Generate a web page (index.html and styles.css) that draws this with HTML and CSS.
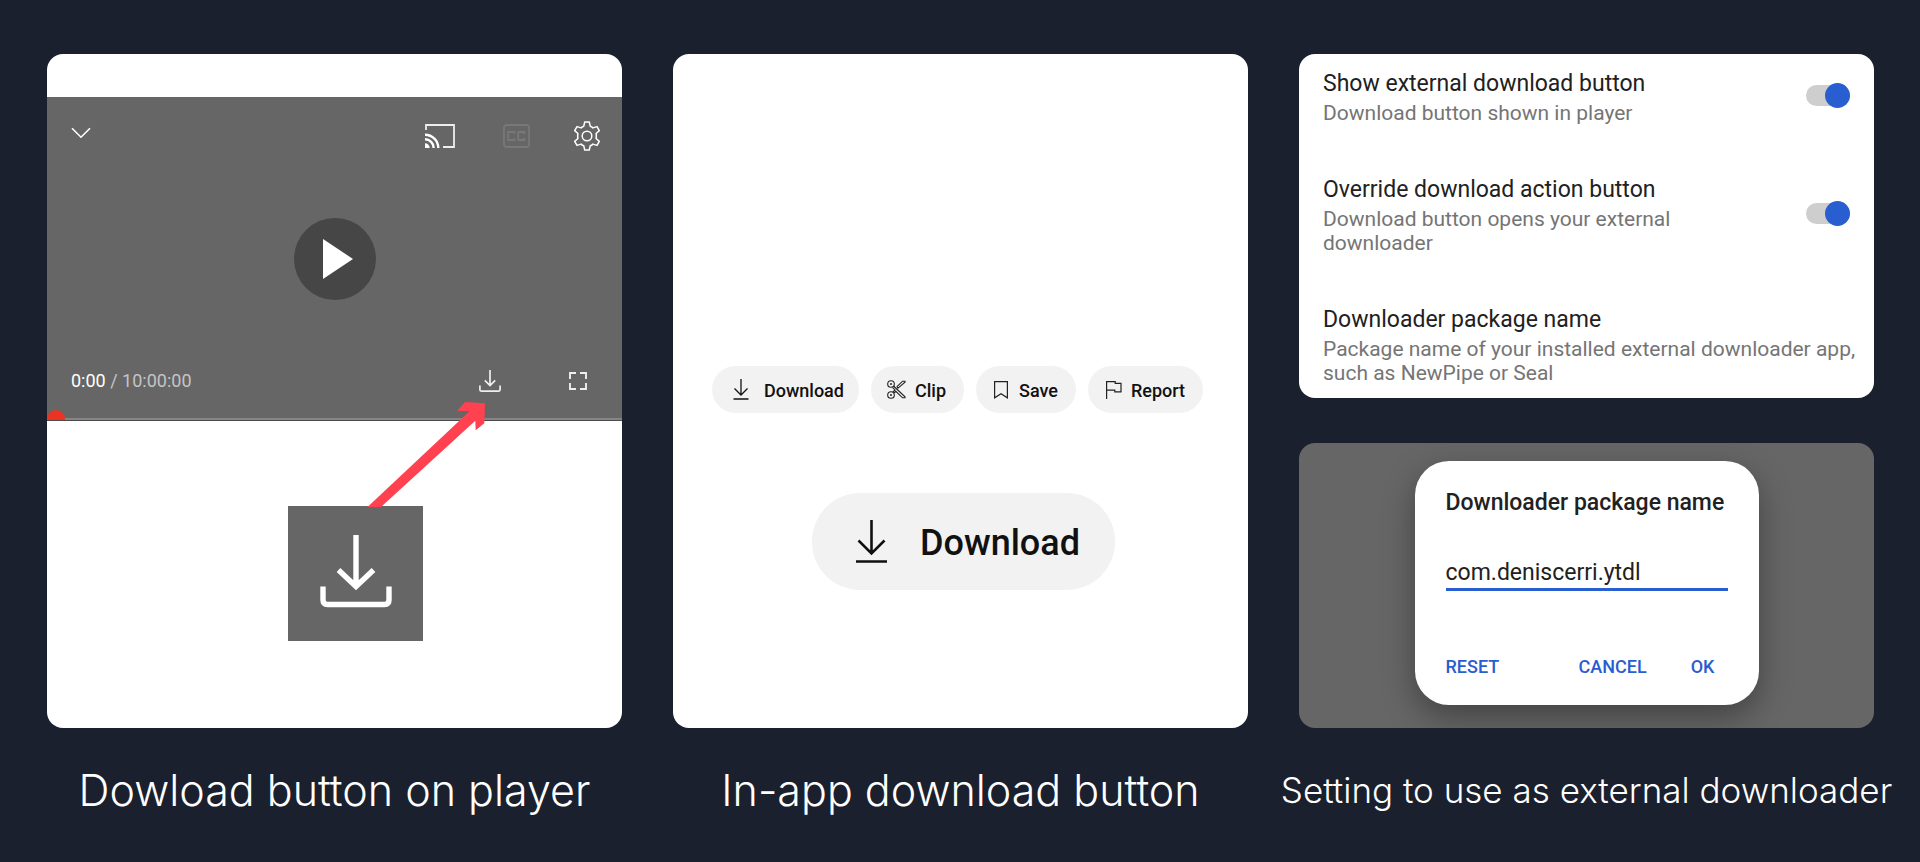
FILE: index.html
```html
<!DOCTYPE html>
<html lang="en">
<head>
<meta charset="utf-8">
<title>External downloader</title>
<link rel="stylesheet" href="styles.css">
</head>
<body>
<main class="board">
  <figure class="column">
    <div class="card phone">
      <section class="player" aria-label="Player">
        <div class="bar bar-top">
          <button class="icon-button" aria-label="Collapse"><svg class="chevron" width="20" height="12" viewBox="0 0 20 12"><path d="M1 1.2l9 9 9-9" fill="none" stroke="#fff" stroke-width="1.6"/></svg></button>
          <div class="tools">
            <button class="icon-button" aria-label="Cast"><svg width="30" height="24" viewBox="0 0 30 24"><path d="M1 6V1h28v22H18" fill="none" stroke="#eee" stroke-width="1.8"/><g fill="none" stroke="#fff" stroke-width="2.4"><path d="M0 10.7A13.3 13.3 0 0 1 13.3 24M0 15.3A8.7 8.7 0 0 1 8.7 24"/></g><path d="M0 19.3A4.7 4.7 0 0 1 4.7 24H0z" fill="#fff"/></svg></button>
            <button class="icon-button captions" aria-label="Captions" disabled><svg width="27" height="24" viewBox="0 0 27 24"><g fill="none" stroke="#787878" stroke-width="1.8"><rect x="1" y="1" width="25" height="22" rx="2.5"/><path d="M11.3 10V8H5.200v8H11.300V14M21.300 10V8H15.200v8h6.100V14"/></g></svg></button>
            <button class="icon-button" aria-label="Settings"><svg width="30" height="30" viewBox="0 0 30 30"><g fill="none" stroke="#fff" stroke-width="1.5" stroke-linejoin="round"><path d="M12.7 1h4.6l.9 4.2q1.5.5 2.7 1.7l4.1-1.3 2.3 4-3.2 2.9q.5 2.5 0 5l3.2 2.9-2.3 4-4.1-1.3q-1.2 1.2-2.7 1.7l-.9 4.2h-4.6l-.9-4.2q-1.5-.5-2.7-1.7L5 24.400l-2.300-4 3.200-2.900q-.5-2.500 0-5L2.700 9.600l2.300-4 4.100 1.300q1.200-1.200 2.700-1.700z"/><circle cx="15" cy="15" r="4.800"/></g></svg></button>
          </div>
        </div>
        <button class="play" aria-label="Play"><svg width="30" height="40" viewBox="0 0 30 40"><path d="M0 0l30 20L0 40z" fill="#fff"/></svg></button>
        <div class="bar bar-bottom">
          <p class="time"><span class="now">0:00</span> / 10:00:00</p>
          <div class="tools tools-bottom">
            <button class="icon-button" aria-label="Download"><svg width="22" height="22" viewBox="0 0 72 72"><g fill="none" stroke="#eee" stroke-width="5.600"><path d="M36 0v51M19 34l17 17 17-17M3 51v14q0 4 4 4h58q4 0 4-4V51"/></g></svg></button>
            <button class="icon-button" aria-label="Full screen"><svg width="20" height="20" viewBox="0 0 20 20"><path d="M8 2H2v6M12 2h6v6M8 18H2v-6M12 18h6v-6" fill="none" stroke="#eee" stroke-width="1.900"/></svg></button>
          </div>
        </div>
        <div class="progress"><span class="knob"></span></div>
      </section>
      <div class="below">
        <div class="closeup">
          <svg class="pointer" width="118" height="106" viewBox="0 0 118 106"><path d="M.5 106L102.500 10.300l-12.200-.6L98 1l20 1.300-.7 20-8.600 7-.4-9.500L14 106z" fill="#ff4150"/></svg>
          <svg width="72" height="73" viewBox="0 0 72 73"><path d="M36 0v52M18.500 35L36 51.500 53.500 35M3 51.500V65q0 4.500 4.500 4.500h57q4.500 0 4.500-4.500V51.500" fill="none" stroke="#fff" stroke-width="5.400"/></svg>
        </div>
      </div>
    </div>
    <figcaption class="caption">Dowload button on player</figcaption>
  </figure>

  <figure class="column">
    <div class="card actions">
      <div class="chips">
        <button class="chip chip-wide"><svg width="16" height="21" viewBox="0 0 16 21"><path d="M8 0v15.500M1.500 9.500L8 16l6.500-6.500M.5 20h15" fill="none" stroke="#111" stroke-width="1.300"/></svg>Download</button>
        <button class="chip"><svg width="19" height="19" viewBox="0 0 19 19"><g fill="none" stroke="#222" stroke-width="1.100"><circle cx="4" cy="4" r="3.300"/><circle cx="4" cy="15" r="3.300"/><path d="M6.500 6L18 16.800v1h-2.400L8.800 11.300 6.800 13.200M5.800 12.200L8 10 5.500 7.300M11 8.200L18 2.200v-1h-2.400L10 6.500z"/></g><circle cx="4" cy="4" r="1" fill="#222"/><circle cx="4" cy="15" r="1" fill="#222"/></svg>Clip</button>
        <button class="chip"><svg class="narrow" width="14" height="18" viewBox="0 0 14 18"><path d="M.6.600h12.800v16.200L7 12.800.600 16.800z" fill="none" stroke="#222" stroke-width="1.200"/></svg>Save</button>
        <button class="chip"><svg class="flag" width="16" height="18" viewBox="0 0 16 18"><path d="M.6 18V.6h8.600v1.700h5.800v8.500H8.800V9.200H.6" fill="none" stroke="#222" stroke-width="1.200"/></svg>Report</button>
      </div>
      <button class="chip chip-large"><svg width="31" height="43" viewBox="0 0 31 43"><path d="M15.500 0v33M2.500 20.500l13 13 13-13M0 41.500h31" fill="none" stroke="#111" stroke-width="2.600"/></svg>Download</button>
    </div>
    <figcaption class="caption">In-app download button</figcaption>
  </figure>

  <figure class="column">
    <div class="stack">
      <div class="card settings">
        <label class="setting"><span class="words"><span class="name">Show external download button</span><span class="note">Download button shown in player</span></span><input class="switch" type="checkbox" checked></label>
        <label class="setting"><span class="words"><span class="name">Override download action button</span><span class="note">Download button opens your external downloader</span></span><input class="switch" type="checkbox" checked></label>
        <div class="setting"><span class="words words-full"><span class="name">Downloader package name</span><span class="note">Package name of your installed external downloader app, such as NewPipe or Seal</span></span></div>
      </div>
      <div class="card backdrop">
        <form class="dialog">
          <label class="dialog-title" for="package">Downloader package name</label>
          <input class="field" id="package" type="text" value="com.deniscerri.ytdl">
          <div class="dialog-buttons">
            <button class="text-button reset" type="button">RESET</button>
            <button class="text-button" type="button">CANCEL</button>
            <button class="text-button" type="button">OK</button>
          </div>
        </form>
      </div>
    </div>
    <figcaption class="caption caption-small">Setting to use as external downloader</figcaption>
  </figure>
</main>
</body>
</html>
```
FILE: styles.css
```css
* { box-sizing: border-box; }
body {
  margin: 0;
  min-height: 100vh;
  background: #1b202e;
  font-family: Roboto, sans-serif;
  color: #212121;
}
button { border: 0; padding: 0; background: none; font: inherit; color: inherit; }
svg { display: block; flex: none; }

.board {
  display: grid;
  grid-template-columns: repeat(3, minmax(0, 1fr));
  gap: 51px;
  padding: 54px 46px 0 47px;
}
.column {
  margin: 0;
  display: grid;
  grid-template-columns: minmax(0, 1fr);
  grid-template-rows: 674px auto;
}
.card { background: #fff; border-radius: 16px; overflow: hidden; }
.caption {
  display: flex;
  justify-content: center;
  padding-top: 30px;
  font: 300 43px/64px Inter, sans-serif;
  color: #fff;
  white-space: nowrap;
}
.caption-small { font-size: 35px; }

/* Player */
.phone { display: flex; flex-direction: column; padding-top: 43px; }
.player {
  display: flex;
  flex-direction: column;
  height: 324px;
  background: #666;
  border-bottom: 1px solid #4c4c4c;
}
.bar { display: flex; justify-content: space-between; align-items: center; }
.bar-top { padding: 24px 20px 0 24px; }
.chevron { margin-bottom: 6px; }
.tools { display: flex; align-items: center; gap: 42px; }
.captions { margin-left: 6px; }
.play {
  display: grid;
  place-items: center;
  align-self: center;
  width: 82px;
  height: 82px;
  margin-top: 67px;
  padding-left: 6px;
  border-radius: 50%;
  background: #464646;
}
.bar-bottom { margin-top: 69px; padding: 0 34px 0 24px; }
.tools-bottom { gap: 67px; }
.time { margin: 0; font-size: 18px; line-height: 24px; color: #c4c4c4; }
.now { color: #fff; }
.progress { height: 2px; margin-top: auto; background: #858585; }
.progress .knob {
  display: block;
  width: 18px;
  height: 10px;
  margin-top: -8px;
  border-radius: 9px 9px 0 0;
  background: #ec3323;
}
.below { flex: 1; display: flex; justify-content: center; align-items: flex-start; padding: 85px 0 0 42px; }
.closeup {
  position: relative;
  display: grid;
  place-items: center;
  width: 135px;
  height: 135px;
  padding-bottom: 5px;
  background: #666;
}
.pointer { position: absolute; left: 79px; bottom: 134px; overflow: visible; }

/* Action chips */
.actions { display: flex; flex-direction: column; align-items: center; padding-top: 312px; gap: 80px; }
.chips { display: flex; gap: 12px; margin-right: 6px; }
.chip {
  display: flex;
  align-items: center;
  gap: 9px;
  height: 47px;
  padding: 2px 18px 0 16px;
  border-radius: 24px;
  background: #f2f2f2;
  color: #111;
  font-size: 18px;
  font-weight: 500;
}
.chip svg { margin-bottom: 2px; }
.chip .narrow { margin-left: 2px; margin-right: 2px; }
.chip .flag { margin-left: 2px; }
.chip-wide { padding: 2px 15px 0 21px; gap: 15px; }
.chip-large {
  height: 97px;
  margin-left: 6px;
  padding: 2px 35px 0 44px;
  gap: 33px;
  border-radius: 48px;
  font-size: 36px;
}

/* Settings */
.stack { display: flex; flex-direction: column; gap: 45px; }
.settings { display: flex; flex-direction: column; gap: 51px; padding: 16px 16px 13px 24px; }
.setting { display: flex; align-items: center; justify-content: space-between; }
.words { display: flex; flex-direction: column; gap: 3px; max-width: 400px; }
.words-full { max-width: none; }
.name { font-size: 23px; line-height: 28px; }
.note { font-size: 21px; line-height: 24px; color: #757575; }
.switch {
  appearance: none;
  position: relative;
  flex: none;
  width: 44px;
  height: 21px;
  margin: 0 8px 4px;
  border-radius: 11px;
  background: #cecece;
}
.switch::before {
  content: "";
  position: absolute;
  right: 0;
  top: -2px;
  width: 25px;
  height: 25px;
  border-radius: 50%;
  background: #285ecf;
}

/* Dialog */
.backdrop { flex: 1; display: grid; justify-content: center; align-content: start; padding-top: 18px; background: #666; }
.dialog {
  display: flex;
  flex-direction: column;
  width: 344px;
  height: 244px;
  padding: 28px 31px 26px;
  border-radius: 34px;
  background: #fff;
  box-shadow: 0 12px 32px rgba(0, 0, 0, 0.35);
}
.dialog-title { font-size: 23px; line-height: 28px; font-weight: 500; white-space: nowrap; }
.field {
  width: 100%;
  height: 34px;
  margin-top: 40px;
  padding: 0;
  border: 0;
  border-bottom: 3px solid #285ecf;
  outline: 0;
  font: 23px/28px Roboto, sans-serif;
  color: #212121;
}
.dialog-buttons { display: flex; gap: 44px; margin-top: auto; padding-right: 13px; }
.text-button { color: #285ecf; font-size: 18px; line-height: 24px; font-weight: 500; }
.reset { margin-right: auto; }
```
